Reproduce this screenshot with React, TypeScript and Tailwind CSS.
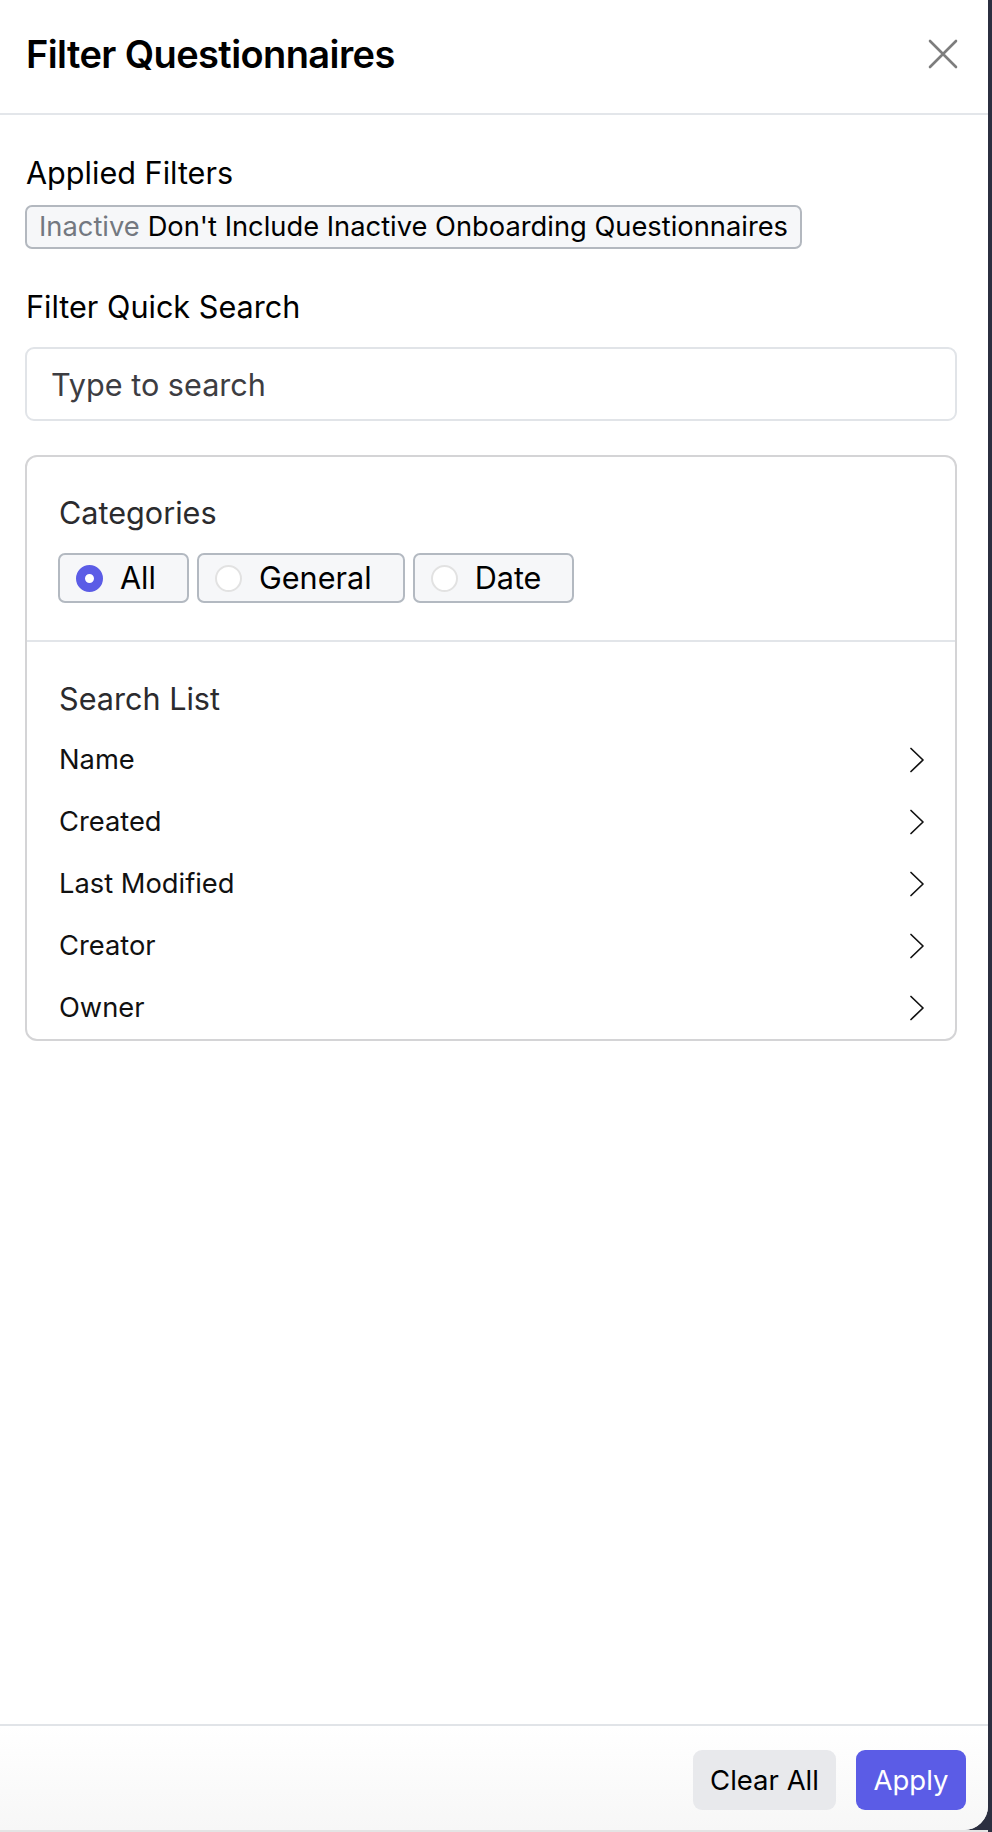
import React, { useState } from "react";

const CATEGORIES = ["All", "General", "Date"];
const SEARCH_FIELDS = ["Name", "Created", "Last Modified", "Creator", "Owner"];

function CloseIcon() {
  return (
    <svg width="30" height="30" viewBox="0 0 30 30" fill="none" aria-hidden="true">
      <path d="M2 2L28 28M28 2L2 28" stroke="#7d7d7d" strokeWidth="2.6" strokeLinecap="round" />
    </svg>
  );
}

function Chevron() {
  return (
    <svg width="16" height="26" viewBox="0 0 16 26" fill="none" aria-hidden="true">
      <path d="M2 1.5L14 13L2 24.5" stroke="#111" strokeWidth="1.7" strokeLinecap="round" strokeLinejoin="round" />
    </svg>
  );
}

function RadioPill({ label, checked, onSelect }: { label: string; checked: boolean; onSelect: () => void }) {
  return (
    <button
      type="button"
      onClick={onSelect}
      className="flex h-[50px] items-center gap-[17px] rounded-[7px] border-2 border-[#b3b9c1] bg-[#f6f7f9] pl-[16px] pr-[31px]"
    >
      {checked ? (
        <span className="h-[27px] w-[27px] rounded-full border-[9px] border-[#5b5ce6] bg-white" />
      ) : (
        <span className="h-[27px] w-[27px] rounded-full border-2 border-[#e2e2e2] bg-white" />
      )}
      <span className="text-[30.6px] leading-[36px] text-black">{label}</span>
    </button>
  );
}

export default function App() {
  const [category, setCategory] = useState("All");

  return (
    <div className="flex h-[1832px] w-[992px] bg-[#2b2f40] font-['Inter',sans-serif]">
      <div className="flex w-[988px] flex-col">
        <div className="flex h-[1830px] flex-col overflow-hidden rounded-br-[24px] bg-white">
          {/* header */}
          <div className="flex h-[115px] shrink-0 items-start justify-between border-b-2 border-[#e3e6ea] pl-[26px] pr-[30px] pt-[34px]">
            <h1 className="text-[38px] font-semibold leading-[40px] tracking-[-0.6px] text-black">
              Filter Questionnaires
            </h1>
            <button type="button" aria-label="Close" className="mt-[5px]">
              <CloseIcon />
            </button>
          </div>

          {/* body */}
          <div className="flex-1 pl-[25px] pr-[31px] pt-[41px]">
            <div className="pl-[1px] text-[30.6px] leading-[34px] text-black">Applied Filters</div>
            <div className="mt-[15px] inline-flex h-[44px] items-center rounded-[7px] border-2 border-[#b3b8bf] bg-[#f6f7f9] px-[12px] text-[27.3px] leading-[34px]">
              <span className="text-[#737880]">Inactive</span>
              <span className="ml-[8px] text-black">Don't Include Inactive Onboarding Questionnaires</span>
            </div>

            <div className="mt-[41px] pl-[1px] text-[30.6px] leading-[34px] text-black">Filter Quick Search</div>
            <input
              type="text"
              placeholder="Type to search"
              className="mt-[23px] block h-[74px] w-full rounded-[9px] border-2 border-[#e1e4e8] bg-white px-[24px] text-[30.6px] text-gray-800 outline-none placeholder:text-[#3d3d42]"
            />

            <div className="mt-[34px] rounded-[12px] border-2 border-[#d4d4d6]">
              <div className="border-b-2 border-[#e2e5e9] px-[31px] pb-[37px] pt-[39px]">
                <div className="pl-[1px] text-[30.6px] leading-[34px] text-[#2b2b2e]">Categories</div>
                <div className="mt-[23px] flex gap-[8px]">
                  {CATEGORIES.map((c) => (
                    <RadioPill key={c} label={c} checked={category === c} onSelect={() => setCategory(c)} />
                  ))}
                </div>
              </div>

              <div className="pl-[31px] pr-[30px] pt-[40px]">
                <div className="pl-[1px] text-[30.6px] leading-[34px] text-[#2b2b2e]">Search List</div>
                <div className="mt-[13px]">
                  {SEARCH_FIELDS.map((f) => (
                    <div key={f} className="flex h-[62px] items-center justify-between">
                      <span className="pl-[1px] text-[27.3px] leading-[34px] text-[#111]">{f}</span>
                      <Chevron />
                    </div>
                  ))}
                </div>
              </div>
            </div>
          </div>

          {/* footer */}
          <div className="flex h-[106px] shrink-0 items-start justify-end gap-[20px] border-t-2 border-[#e1e4e8] bg-gradient-to-b from-white to-[#f7f7f7] pr-[22px] pt-[24px]">
            <button
              type="button"
              className="h-[60px] w-[143px] rounded-[9px] bg-[#e8e9ec] text-[27.5px] leading-[34px] text-black"
            >
              Clear All
            </button>
            <button
              type="button"
              className="h-[60px] w-[110px] rounded-[9px] bg-[#5b5ce6] text-[27.5px] leading-[34px] text-white"
            >
              Apply
            </button>
          </div>
        </div>
        <div className="h-[2px] bg-[#e4e4e4]" />
      </div>
    </div>
  );
}
